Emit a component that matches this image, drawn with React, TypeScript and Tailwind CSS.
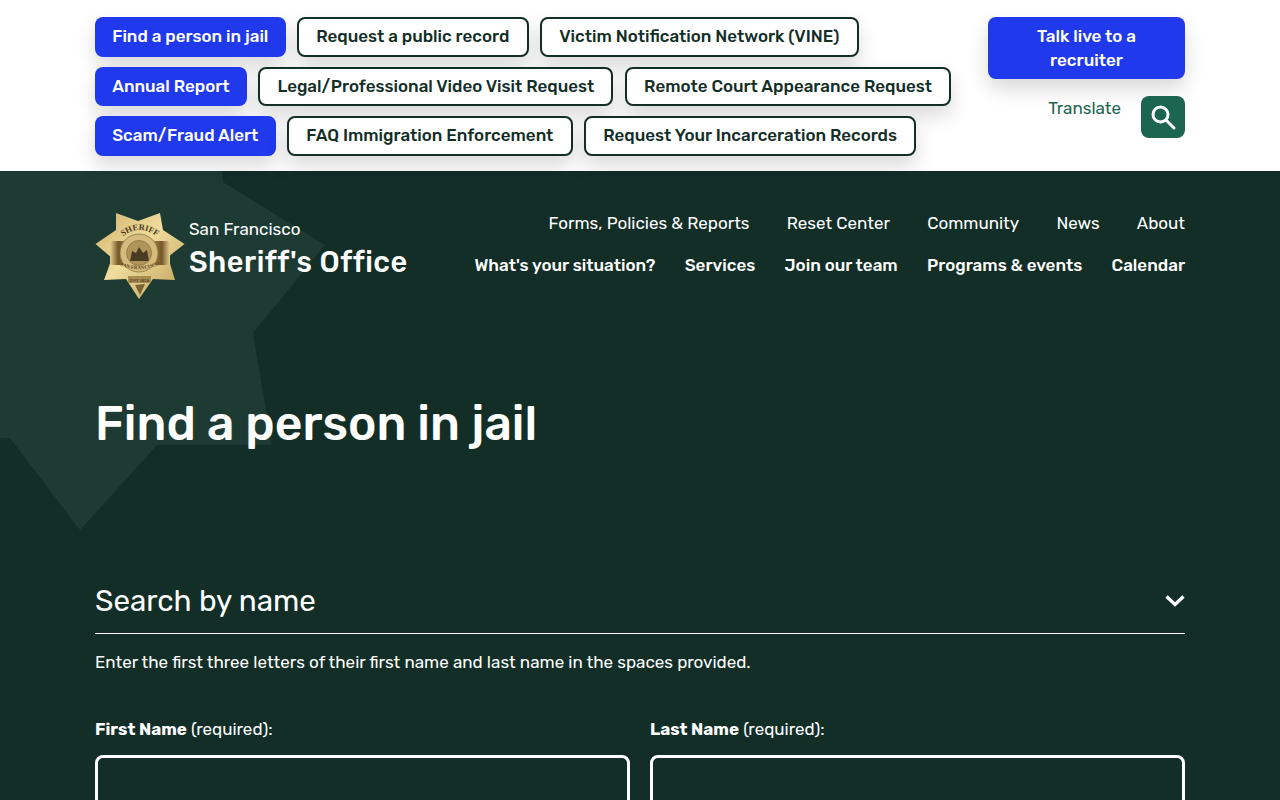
import React from 'react';

const font = 'font-["Rubik","Inter","Noto_Sans",sans-serif]';

const quickLinks = [
  [
    { label: 'Find a person in jail', primary: true },
    { label: 'Request a public record' },
    { label: 'Victim Notification Network (VINE)' },
  ],
  [
    { label: 'Annual Report', primary: true },
    { label: 'Legal/Professional Video Visit Request' },
    { label: 'Remote Court Appearance Request' },
  ],
  [
    { label: 'Scam/Fraud Alert', primary: true },
    { label: 'FAQ Immigration Enforcement' },
    { label: 'Request Your Incarceration Records' },
  ],
];

const Badge = () => (
  <svg viewBox="0 0 90 88" className="w-[90px] h-[88px] shrink-0">
    <defs>
      <linearGradient id="gold" x1="0" y1="0" x2="1" y2="1">
        <stop offset="0" stopColor="#cfb26c" />
        <stop offset="0.45" stopColor="#f0dc9c" />
        <stop offset="1" stopColor="#bb9c55" />
      </linearGradient>
      <linearGradient id="band" x1="0" y1="0" x2="1" y2="0">
        <stop offset="0" stopColor="#e6d08e" />
        <stop offset="0.14" stopColor="#75562a" />
        <stop offset="0.3" stopColor="#a98a4c" />
        <stop offset="0.7" stopColor="#a98a4c" />
        <stop offset="0.86" stopColor="#75562a" />
        <stop offset="1" stopColor="#e6d08e" />
      </linearGradient>
      <path id="arcTop" d="M23 29 Q44 7 67 29" />
      <path id="arcBottom" d="M24 53 Q44 62 66 52" />
    </defs>
    <polygon
      fill="url(#gold)"
      points="21,1 43,9 65,1 68,18 89.5,32 73,45 80,68 58,67 44,87 31,67 9,68 17,46 0.5,32 21,18"
    />
    <rect x="15" y="29" width="60" height="24" rx="3" fill="url(#band)" />
    <circle cx="44" cy="41" r="19" fill="#d4bb7b" stroke="#8f7440" strokeWidth="0.8" />
    <circle cx="44" cy="41" r="12.5" fill="#b0945a" stroke="#7d6436" strokeWidth="0.6" />
    <path d="M35 49 L37 39 L41 41 L44 35 L48 41 L52 38 L54 49 Z" fill="#4a3c22" />
    <text fontSize="8.5" fontWeight="700" fill="#4a3a1c" fontFamily="Liberation Serif, serif">
      <textPath href="#arcTop" startOffset="50%" textAnchor="middle">SHERIFF</textPath>
    </text>
    <text fontSize="5" fontWeight="700" fill="#5a4722" fontFamily="Liberation Serif, serif">
      <textPath href="#arcBottom" startOffset="50%" textAnchor="middle">SAN FRANCISCO</textPath>
    </text>
    <rect x="33" y="64" width="23" height="7" fill="#a88c50" />
    <text x="44.5" y="69.8" textAnchor="middle" fontSize="4.6" fontWeight="700" fill="#4a3a1c" fontFamily="Liberation Serif, serif">EST 1850</text>
    <path d="M40 73 L50 72 L45 83 Z" fill="#7a6233" />
  </svg>
);

const App: React.FC = () => {
  return (
    <div className={`${font} w-full h-[800px] overflow-hidden bg-[#122e27]`}>
      <div className="relative z-10 h-[171px] bg-white px-[95px] pt-[17px] flex justify-between">
        <div className="flex flex-col gap-[10px]">
          {quickLinks.map((row, i) => (
            <div key={i} className="flex gap-[11.5px]">
              {row.map((link) => (
                <a
                  key={link.label}
                  className={
                    link.primary
                      ? 'h-[39.5px] px-[17.2px] flex items-center rounded-lg bg-[#2039ec] text-white text-[16.97px] font-medium shadow-[0_10px_20px_rgba(0,0,0,0.15)]'
                      : 'h-[39.5px] px-[17.2px] flex items-center rounded-lg bg-white border-2 border-[#122e27] text-[#122e27] text-[16.97px] font-medium shadow-[0_10px_20px_rgba(0,0,0,0.15)]'
                  }
                >
                  {link.label}
                </a>
              ))}
            </div>
          ))}
        </div>
        <div className="w-[197px] flex flex-col">
          <a className="h-[62px] rounded-lg bg-[#2039ec] text-white text-[17px] leading-6 font-medium text-center flex items-center justify-center px-8 shadow-[0_10px_20px_rgba(0,0,0,0.15)]">
            Talk live to a recruiter
          </a>
          <div className="mt-[17px] flex justify-end gap-5">
            <span className="text-[17px] leading-6 text-[#1c6650]">Translate</span>
            <button className="w-[44px] h-[42px] rounded-lg bg-[#1c6650] flex items-center justify-center">
              <svg viewBox="0 0 26 26" className="w-[26px] h-[26px]" fill="none" stroke="white" strokeWidth="3">
                <circle cx="10.5" cy="10.5" r="7.5" />
                <path d="M16 16 L24 24" strokeLinecap="round" />
              </svg>
            </button>
          </div>
        </div>
      </div>

      <div className="relative h-[629px] px-[95px] text-white">
        {/* big faded star behind the header */}
        <svg className="absolute left-0 top-0 w-[340px] h-[370px]" viewBox="0 0 340 370">
          <polygon
            fill="#1d3b33"
            points="0,0 222,0 223,11 325,74 253,162 272,274 157,274 80,359 10,267 0,267"
          />
        </svg>

        <div className="relative flex justify-between items-start pt-[37px]">
          <div className="flex items-start gap-1">
            <div className="mt-1">
              <Badge />
            </div>
            <div className="mt-[9px]">
              <div className="text-[17px] leading-6">San Francisco</div>
              <div className="text-[29px] leading-9 font-medium tracking-[0.5px] mt-[3px]">Sheriff's Office</div>
            </div>
          </div>
          <nav className="flex flex-col items-end">
            <div className="flex gap-[37.25px] text-[17px] leading-6 mt-[3px]">
              <a>Forms, Policies &amp; Reports</a>
              <a>Reset Center</a>
              <a>Community</a>
              <a>News</a>
              <a>About</a>
            </div>
            <div className="flex gap-[29.25px] text-[17px] leading-6 font-medium mt-[18px]">
              <a>What's your situation?</a>
              <a>Services</a>
              <a>Join our team</a>
              <a>Programs &amp; events</a>
              <a>Calendar</a>
            </div>
          </nav>
        </div>

        <h1 className="relative mt-[94px] text-[48px] leading-[60px] font-medium">Find a person in jail</h1>

        <div className="mt-[120px] pt-[9px] pb-[14px] flex items-center justify-between border-b border-white">
          <h2 className="text-[29.6px] leading-9">Search by name</h2>
          <svg viewBox="0 0 20 12" className="w-5 h-3" fill="none" stroke="white" strokeWidth="3.4">
            <path d="M1.5 1.5 L10 9.5 L18.5 1.5" />
          </svg>
        </div>
        <p className="mt-4 text-[17px] leading-6">
          Enter the first three letters of their first name and last name in the spaces provided.
        </p>

        <div className="mt-[43px] grid grid-cols-2 gap-5">
          <div>
            <label className="block text-[17px] leading-6">
              <b className="font-bold">First Name</b> (required):
            </label>
            <div className="mt-[14px] h-[80px] rounded-lg border-[3px] border-white" />
          </div>
          <div>
            <label className="block text-[17px] leading-6">
              <b className="font-bold">Last Name</b> (required):
            </label>
            <div className="mt-[14px] h-[80px] rounded-lg border-[3px] border-white" />
          </div>
        </div>
      </div>
    </div>
  );
};

export default App;
